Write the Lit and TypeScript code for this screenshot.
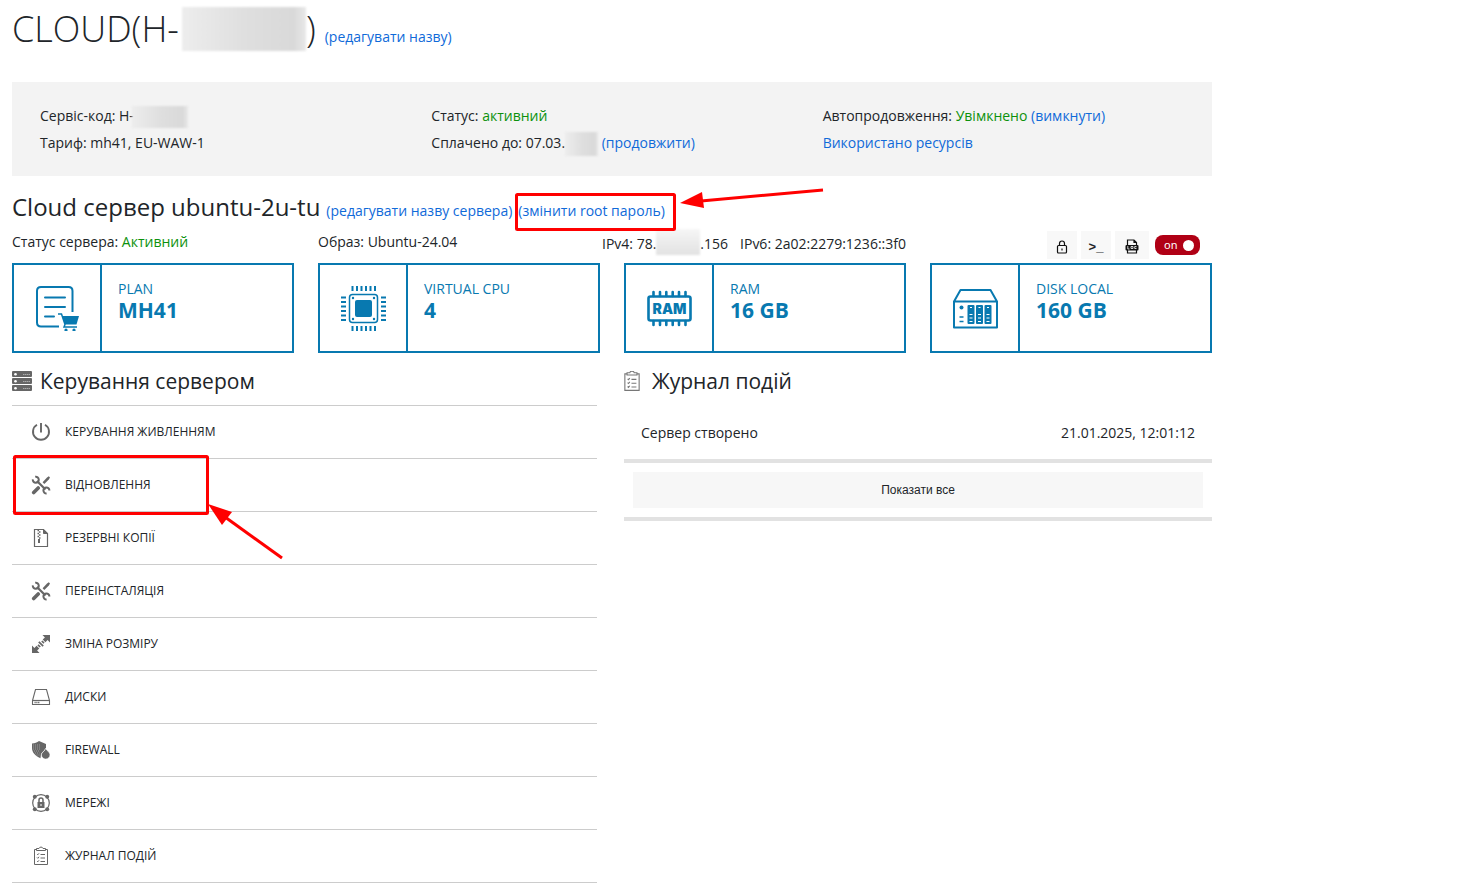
import { LitElement, html, svg, css, TemplateResult } from "lit";
import { customElement, property, state } from "lit/decorators.js";

const wrench = svg`
  <g fill="none" stroke="currentColor">
    <path d="M6 6 14.500 14.500" stroke-width="2.200"/>
    <path d="M4.200 1.800A3 3 0 1 1 1.800 4.400" stroke-width="2"/>
    <path d="M18.400 15.400A3 3 0 1 0 15.600 18.400" stroke-width="2"/>
    <path d="M2.700 17.500 7.200 13" stroke-width="3.600" stroke-linecap="round"/>
  </g>
  <path d="M17.800 1.200 19 2.400 17.800 4.400 13.300 9 11.600 7.300 16 2.600Z" fill="currentColor"/>`;

const clipboard = svg`
  <g fill="none" stroke="currentColor" stroke-width="1">
    <path d="M5.500 3.500H3.500V18.500H16.500V3.500H14.500"/>
    <path d="M5.500 4.500V2.500H8C8.300 .6 11.700 .6 12 2.500H14.500V4.500Z"/>
    <path d="M6 8 6.800 8.800 8 7.300M6 11.500 6.800 12.300 8 10.800M6 15 6.800 15.800 8 14.300M9.500 8.500H14M9.500 12H14M9.500 15.500H14"/>
  </g>`;

const menuIcons: Record<string, unknown> = {
  power: svg`<g fill="none" stroke="currentColor" stroke-width="1.900"><path d="M10 1V10.500"/><path d="M6 2.800A8 8 0 1 0 14 2.800"/></g>`,
  wrench,
  archive: svg`
    <path d="M3.500 1.500H12.500L16.500 5.500V18.500H3.500Z" fill="none" stroke="currentColor" stroke-width="1.200"/>
    <path d="M12.500 1.500V5.500H16.500Z" fill="currentColor" stroke="currentColor"/>
    <path d="M6.500 2.500H8M8 4H9.500M6.500 5.500H8M8 7H9.500M6.500 8.500H8M8 10H9.500" stroke="currentColor" stroke-width="1.300"/>
    <path d="M8 11V15" stroke="currentColor" stroke-width="2"/>`,
  resize: svg`
    <path d="M11.500 1H19V8.500L16.600 6.100 14.400 8.300 11.700 5.600 13.900 3.400ZM8.500 19H1V11.500L3.400 13.900 5.600 11.700 8.300 14.400 6.100 16.600Z" fill="currentColor"/>
    <path d="M7.800 7.800 12.200 12.200M10.800 7 13 9.200M7 10.800 9.200 13" stroke="currentColor" stroke-width="1.700"/>`,
  disk: svg`
    <g fill="none" stroke="currentColor"><path d="M4.500 2.500H15.500L18.500 13.500V17.500H1.500V13.500Z" stroke-width="1.100"/><path d="M1.500 13.500H18.500" stroke-width="1.200"/><path d="M3.500 15.500H9" stroke-width="1.400" stroke-dasharray="1.200 .6"/></g>`,
  firewall: svg`
    <path d="M8 1 15 4V8C13 11 11 12 10 14L9.500 18.200C4 16 1 12 1 8V3.500C4 3.500 6 2.500 8 1Z" fill="currentColor"/>
    <path d="M2 5H9M2 7H9M2 9H9M3 11H8.500M4 13H8.500M5.500 15H8.500" stroke="#aaa" stroke-width=".8" stroke-dasharray="1 1"/>
    <path d="M14.500 8.500C16 11 19 12 19 14.800A4.300 4.300 0 0 1 10.400 14.800C10.400 12.200 13.800 11.500 14.500 8.500Z" fill="currentColor" stroke="#fff" stroke-width=".6"/>`,
  network: svg`
    <circle cx="10" cy="10" r="8.300" fill="none" stroke="currentColor" stroke-width="1.200"/>
    <g fill="currentColor"><circle cx="3.800" cy="3.800" r="2"/><circle cx="16.200" cy="3.800" r="2"/><circle cx="3.800" cy="16.200" r="2"/><circle cx="16.200" cy="16.200" r="2"/></g>
    <path d="M6.500 9H13.500V15H6.500Z" fill="currentColor"/>
    <path d="M8 9V7A2 2 0 0 1 12 7V9" fill="none" stroke="currentColor" stroke-width="1.500"/>
    <path d="M10 11V13" stroke="#fff"/>`,
  clipboard,
};

const rack = svg`
  <path d="M1 0H19Q20 0 20 1V5Q20 6 19 6H1Q0 6 0 5V1Q0 0 1 0ZM1 7H19Q20 7 20 8V12Q20 13 19 13H1Q0 13 0 12V8Q0 7 1 7ZM1 14H19Q20 14 20 15V19Q20 20 19 20H1Q0 20 0 19V15Q0 14 1 14Z" fill="#666"/>
  <g fill="#fff"><circle cx="3.500" cy="3.200" r="1.300"/><circle cx="3.500" cy="10.200" r="1.300"/><circle cx="3.500" cy="17.200" r="1.300"/></g>
  <path d="M11 3.500H18M11 10.500H18M11 17.500H18" stroke="#aaa" stroke-width="1.200" stroke-dasharray="1.400 .5"/>`;

const planIcon = svg`
  <path d="M24 40.500H6Q2 40.500 2 36.500V5Q2 1 6 1H33.500Q37.500 1 37.500 5V26" fill="none" stroke="currentColor" stroke-width="2"/>
  <path d="M10 11.500H30M10 21H30M10 30.500H19" stroke="currentColor" stroke-width="2" stroke-linecap="round"/>
  <path d="M23 28H26.500L30 38.500 29 41H42" fill="none" stroke="currentColor" stroke-width="1.500"/>
  <path d="M27 30H44L41.500 38.500H30Z" fill="currentColor"/>
  <circle cx="31" cy="44" r="1.600" fill="currentColor"/><circle cx="39" cy="44" r="1.600" fill="currentColor"/>`;

const cpuIcon = svg`
  <rect x="8.500" y="8.500" width="28" height="28" rx="3" fill="none" stroke="currentColor" stroke-width="1.500"/>
  <rect x="14" y="14" width="17" height="17" rx="2" fill="currentColor"/>
  <g fill="currentColor"><circle cx="12" cy="12" r="1.200"/><circle cx="33" cy="12" r="1.200"/><circle cx="12" cy="33" r="1.200"/><circle cx="33" cy="33" r="1.200"/></g>
  <path d="M10.500 2.500H35M10.500 42.500H35" stroke="currentColor" stroke-width="5" stroke-dasharray="2 2.500"/>
  <path d="M2.500 10.500V35M42.500 10.500V35" stroke="currentColor" stroke-width="5" stroke-dasharray="2 2.500"/>`;

const ramIcon = svg`
  <rect x="1.500" y="10.500" width="42" height="24" rx="2" fill="none" stroke="currentColor" stroke-width="2.600"/>
  <path d="M6.500 6V10M13 6V10M19.300 6V10M25.700 6V10M32 6V10M38.500 6V10M6.500 35V39M13 35V39M19.300 35V39M25.700 35V39M32 35V39M38.500 35V39" stroke="currentColor" stroke-width="2.600" stroke-linecap="round"/>
  <text x="22.500" y="28" text-anchor="middle" font-family="Inter, sans-serif" font-weight="900" font-size="14" fill="currentColor">RAM</text>`;

const nasIcon = svg`
  <path d="M1 15.500 7.500 4H37.500L44 15.500V41.500H1ZM1 15.500H44" fill="none" stroke="currentColor" stroke-width="2" stroke-linejoin="round"/>
  <circle cx="8.500" cy="21.500" r="2" fill="currentColor"/>
  <path d="M6.500 31H10.500M6.500 35.500H10.500" stroke="currentColor" stroke-width="1.600"/>
  ${[14.5, 23, 31.5].map(
    (x) => svg`<g transform="translate(${x} 19)"><rect width="7" height="19" rx="1" fill="currentColor"/><path d="M2.500 2.500H4.500M2 9.500H5M2 13H5M2 16.500H5" stroke="#fff" stroke-width="1"/></g>`
  )}`;

const base = css`
  *, *::before, *::after { box-sizing: border-box; }
  a { color: #0f6ad9; text-decoration: none; }
  svg { display: block; flex: none; }
`;

@customElement("spec-card")
export class SpecCard extends LitElement {
  @property() label = "";
  @property() value = "";
  @property({ attribute: false }) icon: unknown;

  static styles = [base, css`
    :host { box-sizing: border-box; display: flex; height: 90px; border: 2px solid #0879b0; color: #0879b0; }
    .icon { display: flex; align-items: center; justify-content: center; width: 88px; border-right: 2px solid #0879b0; }
    .text { padding: 14px 16px; }
    .label { font-size: 14px; line-height: 20px; }
    .value { font-size: 21px; line-height: 23px; font-weight: 700; }
  `];

  render() {
    return html`
      <div class="icon"><svg width="45" height="45" viewBox="0 0 45 45" aria-hidden="true">${this.icon}</svg></div>
      <div class="text"><div class="label">${this.label}</div><div class="value">${this.value}</div></div>`;
  }
}

interface MenuItem { icon: string; label: string; marked?: boolean }

@customElement("app-root")
export class AppRoot extends LitElement {
  @state() private on = true;

  private menu: MenuItem[] = [
    { icon: "power", label: "Керування живленням" },
    { icon: "wrench", label: "Відновлення", marked: true },
    { icon: "archive", label: "Резервні копії" },
    { icon: "wrench", label: "Переінсталяція" },
    { icon: "resize", label: "Зміна розміру" },
    { icon: "disk", label: "Диски" },
    { icon: "firewall", label: "Firewall" },
    { icon: "network", label: "Мережі" },
    { icon: "clipboard", label: "Журнал подій" },
  ];

  static styles = [base, css`
    :host { box-sizing: border-box; display: block; max-width: 1224px; padding: 0 12px 12px; font: 14px/20px "Open Sans", "Noto Sans", sans-serif; color: #212529; background: #fff; }
    h1, h2, h3, p, ul { margin: 0; padding: 0; font-weight: 400; }
    .title { display: flex; align-items: baseline; height: 82px; padding-top: 4px; }
    h1 { display: flex; align-items: center; font-size: 36px; line-height: 50px; font-weight: 300; }
    .title a { margin-left: 9px; }
    .veil { display: inline-block; background: linear-gradient(90deg, #ededed, #dfdfdf 50%, #d9d9d9 90%, #e8e8e8); filter: blur(1px); }
    .veil-title { width: 124px; height: 44px; margin-left: 3px; }
    .veil-code { width: 56px; height: 22px; margin-left: -2px; vertical-align: middle; }
    .veil-date { width: 33px; height: 24px; vertical-align: middle; }
    .veil-ip { width: 44px; height: 26px; margin: -6px 0 0; vertical-align: middle; background: linear-gradient(#f6f6f6, #e2e2e2); }
    .info { display: grid; grid-template-columns: repeat(3, 1fr); column-gap: 30px; padding: 20px 28px; background: #f3f3f3; line-height: 27px; }
    .info p { height: 27px; white-space: nowrap; }
    .ok { color: #0c910c; }
    .server { display: flex; align-items: baseline; padding-top: 14px; height: 55px; }
    h2 { font-size: 24px; line-height: 34px; }
    .server a { margin-left: 6px; }
    .marked { position: relative; }
    .mark { position: absolute; z-index: 1; overflow: visible; pointer-events: none; fill: none; stroke: #f00; stroke-width: 3; }
    .mark-link { left: -3px; top: -8px; }
    .mark-menu { left: 1px; top: -4px; }
    .status { display: grid; grid-template-columns: 306px 284px 1fr auto; height: 32px; }
    .status > p { padding-top: 1px; }
    .status > .ip { padding-top: 3px; white-space: nowrap; }
    .ip span + span { margin-left: 12px; }
    .tools { display: flex; align-items: flex-start; gap: 4px; padding-right: 12px; }
    button { margin: 0; padding: 0; border: 0; font: inherit; color: inherit; cursor: pointer; }
    .tool { display: flex; align-items: center; justify-content: center; width: 30px; height: 28px; padding-top: 3px; background: #f8f8f8; font: 700 13px/20px "Liberation Sans", sans-serif; }
    .tool-wide { width: 34px; }
    .toggle { display: flex; align-items: center; justify-content: space-between; width: 45px; height: 20px; margin: 4px 0 0 2px; padding: 0 6px 0 9px; border-radius: 8px; background: #b00015; color: #fff; font: 11px/20px "Noto Sans", sans-serif; }
    .knob { width: 11px; height: 11px; border-radius: 50%; background: #fff; }
    .toggle.off { flex-direction: row-reverse; background: #888; }
    .cards { display: grid; grid-template-columns: repeat(4, 1fr); gap: 24px; }
    .columns { display: grid; grid-template-columns: 1fr 1fr; gap: 24px; padding-top: 10px; }
    h3 { display: flex; align-items: center; gap: 8px; height: 36px; font-size: 21px; line-height: 34px; }
    .log h3 { gap: 12px; }
    ul { list-style: none; margin: 6px 3px 0 0; border-bottom: 1px solid #ccc; }
    li { position: relative; height: 53px; border-top: 1px solid #ccc; }
    .item { display: flex; align-items: center; gap: 14px; width: 100%; height: 52px; padding-left: 19px; background: none; font-size: 12px; text-transform: uppercase; text-align: left; }
    .item svg { color: #666; }
    .event { display: flex; justify-content: space-between; padding: 24px 17px 16px; border-bottom: 4px solid #e2e2e2; }
    .more { padding: 9px; border-bottom: 4px solid #e2e2e2; }
    .all { display: block; width: 100%; height: 36px; background: #f7f7f7; font: 12px/36px "Liberation Sans", sans-serif; }
  `];

  private arrow(cls: string, w: number, h: number, line: string, head: string): TemplateResult {
    return html`<svg class="mark ${cls}" width=${w + 3} height=${h + 3} aria-hidden="true">
      <rect x="1.500" y="1.500" width=${w} height=${h} rx="1"/><path d=${line}/><path d=${head} fill="#f00" stroke="none"/>
    </svg>`;
  }

  render() {
    return html`
      <header class="title">
        <h1>CLOUD(H-<span class="veil veil-title"></span>)</h1>
        <a href="#">(редагувати назву)</a>
      </header>

      <section class="info">
        <div><p>Сервіс-код: H-<span class="veil veil-code"></span></p><p>Тариф: mh41, EU-WAW-1</p></div>
        <div><p>Статус: <span class="ok">активний</span></p><p>Сплачено до: 07.03.<span class="veil veil-date"></span> <a href="#">(продовжити)</a></p></div>
        <div><p>Автопродовження: <span class="ok">Увімкнено</span> <a href="#">(вимкнути)</a></p><p><a href="#">Використано ресурсів</a></p></div>
      </section>

      <div class="server">
        <h2>Cloud сервер ubuntu-2u-tu</h2>
        <a href="#">(редагувати назву сервера)</a>
        <a href="#" class="marked">(змінити root пароль)${this.arrow("mark-link", 158, 35, "M308-3 186 8", "M165 10 187-1 189 15Z")}</a>
      </div>

      <div class="status">
        <p>Статус сервера: <span class="ok">Активний</span></p>
        <p>Образ: Ubuntu-24.04</p>
        <p class="ip"><span>IPv4: 78.<span class="veil veil-ip"></span>.156</span><span>IPv6: 2a02:2279:1236::3f0</span></p>
        <div class="tools">
          <button class="tool" aria-label="Пароль"><svg width="12" height="14" viewBox="0 0 12 14" fill="none" stroke="#111" stroke-width="1.200"><rect x="1.500" y="5.500" width="9" height="7.500" rx="1"/><path d="M3.500 5.500V3.500A2.500 2.500 0 0 1 8.500 3.500V5.500M6 8.500V10.500"/></svg></button>
          <button class="tool" aria-label="Консоль">&gt;_</button>
          <button class="tool tool-wide" aria-label="Журнал"><svg width="14" height="15" viewBox="0 0 14 15" fill="none" stroke="#111" stroke-width="1.200"><path d="M2.500 6V1H9L11.500 3.500V6M9 1V3.500H11.500M2.500 11V14H11.500V11"/><rect x=".5" y="6" width="13" height="5.500" rx="1" fill="#111" stroke="none"/><path d="M2.800 7V10H4.500M6 7.500H8V9.500H6ZM11.500 7.500H9.700V9.500H11.200V8.800" stroke="#fff" stroke-width=".8"/></svg></button>
          <button class="toggle ${this.on ? "" : "off"}" role="switch" aria-checked=${this.on} @click=${() => (this.on = !this.on)}>${this.on ? "on" : "off"}<span class="knob"></span></button>
        </div>
      </div>

      <section class="cards">
        <spec-card label="PLAN" value="MH41" .icon=${planIcon}></spec-card>
        <spec-card label="VIRTUAL CPU" value="4" .icon=${cpuIcon}></spec-card>
        <spec-card label="RAM" value="16 GB" .icon=${ramIcon}></spec-card>
        <spec-card label="DISK LOCAL" value="160 GB" .icon=${nasIcon}></spec-card>
      </section>

      <div class="columns">
        <section>
          <h3><svg width="20" height="20" viewBox="0 0 20 20" aria-hidden="true">${rack}</svg>Керування сервером</h3>
          <ul>
            ${this.menu.map((m) => html`<li>
              <button class="item"><svg width="20" height="20" viewBox="0 0 20 20" aria-hidden="true">${menuIcons[m.icon]}</svg>${m.label}</button>
              ${m.marked ? this.arrow("mark-menu", 193, 57, "M269 103 212 62", "M195 49 219 57 209 70Z") : ""}
            </li>`)}
          </ul>
        </section>
        <section class="log">
          <h3><svg width="16" height="20" viewBox="2.900 0.900 14.200 18.200" color="#777" aria-hidden="true">${clipboard}</svg>Журнал подій</h3>
          <div class="event"><span>Сервер створено</span><time datetime="2025-01-21T12:01:12">21.01.2025, 12:01:12</time></div>
          <div class="more"><button class="all">Показати все</button></div>
        </section>
      </div>`;
  }
}
